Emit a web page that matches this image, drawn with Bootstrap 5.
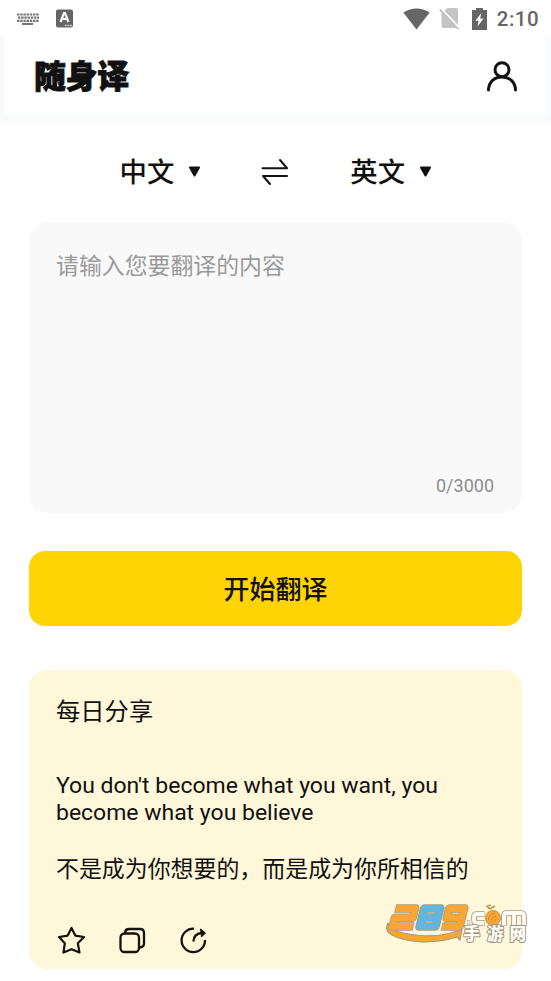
<!DOCTYPE html>
<html lang="zh-CN">
<head>
<meta charset="utf-8">
<meta name="viewport" content="width=device-width, initial-scale=1">
<title>随身译</title>
<link href="https://cdn.jsdelivr.net/npm/bootstrap@5.3.0/dist/css/bootstrap.min.css" rel="stylesheet">
<style>
body{font-family:Roboto,"Noto Sans CJK SC",sans-serif;color:#111;background:#fff;width:551px;height:981px;overflow:hidden}
svg{display:block;flex:none}
.status-bar{height:37px;padding:0 12px 0 17px;color:#666}
.ime-icon{margin-left:17px}
.sim-icon{margin-left:9px}
.battery-icon{margin-left:12px}
.clock{font-size:20.5px;font-weight:500;line-height:24px;letter-spacing:.45px;margin-left:10px}
.app-header{height:78px;margin:0 4px;padding:0 29px 0 30px;box-shadow:0 2px 0 4px #f9fafb;clip-path:inset(0 -4px -6px -4px)}
.brand{font-size:32px;font-weight:900;line-height:40px;letter-spacing:-.4px;padding-top:2px;-webkit-text-stroke:.9px #111}
.lang-row{height:107px;padding:7px 0 0 119.500px;font-size:27.4px;font-weight:500;line-height:40px}
.lang-row span{padding-top:2px}
.caret-icon{margin-left:14px}
.swap-icon{margin-left:60px;margin-right:61px}
.input-box{height:291px;margin:0 29px;padding:26px 28px 14px 27px;background:#f9f9f9;border-radius:20px}
.hint{font-size:22.9px;line-height:38px;color:#9a9a9a}
.counter{font-size:18px;line-height:26px;color:#8d8d8d}
.go-btn{height:75px;width:493px;margin:38px 29px 0;padding-top:8px;background:#ffd405;border:0;border-radius:16px;font-size:26px;font-weight:500;line-height:38px;color:#111}
.go-btn:hover{background:#ffd405}
.daily{height:299px;margin:44px 29px 0;padding:23px 27px 0;background:#fff7d9;border-radius:18px}
.daily-title{font-size:24.3px;line-height:38px}
.quote-en{font-size:22.98px;line-height:27px;margin-top:41px;white-space:nowrap}
.quote-zh{font-size:22.93px;line-height:34px;margin-top:27px;white-space:nowrap}
.actions{margin-top:39px;gap:31px}
.site-mark{left:386px;top:901px}
</style>
<script src="https://cdn.jsdelivr.net/npm/bootstrap@5.3.0/dist/js/bootstrap.bundle.min.js"></script>
</head>
<body class="position-relative">
<div class="status-bar d-flex align-items-center">
  <svg width="22" height="12" viewBox="0 0 22 12" fill="none" stroke="#777" stroke-width="2.200"><path d="M0 1.500H22M1 4.700H22M0 7.900H22" stroke-dasharray="2.400 .8"/><path d="M5 11H16"/></svg>
  <svg class="ime-icon" width="17" height="19" viewBox="0 0 17 19"><rect y=".5" width="17" height="18" rx="2" fill="#666"/><path d="M4.500 13L8 4h1l3.500 9M6 10h5" fill="none" stroke="#fff" stroke-width="2.100"/><path d="M9 16.500h7" stroke="#ddd" stroke-width="1.300" stroke-dasharray="1.600 1"/></svg>
  <svg class="ms-auto" width="27" height="22" viewBox="0 0 27 22" fill="#666"><path d="M.3 4.600Q13.500-3.600 26.700 4.600L13.500 21.500z"/></svg>
  <svg class="sim-icon" width="21" height="23" viewBox="0 0 21 23"><path d="M8.500 1H17q2 0 2 2v15L5.600 4zM2.500 5L17.500 21H4.500q-2 0-2-2z" fill="#c4c4c4"/><path d="M1.500 1.500L20 21" stroke="#fff" stroke-width="1.500"/><path d="M.7 2.400L19.300 22" stroke="#bbb" stroke-width="1.600"/></svg>
  <svg class="battery-icon" width="15" height="22" viewBox="0 0 15 22"><path d="M4 0h7v2h4v20H0V2h4z" fill="#666"/><path d="M9.300 5L3.500 12.800h3.200L5.500 18.500l6-8H8.100z" fill="#fff"/></svg>
  <span class="clock">2:10</span>
</div>
<header class="app-header d-flex align-items-center justify-content-between">
  <div class="brand">随身译</div>
  <svg width="32" height="31" viewBox="0 0 32 31" fill="none" stroke="#111" stroke-width="3" stroke-linecap="round"><circle cx="16" cy="8.700" r="7"/><path d="M2.500 29C2.800 20.500 8.500 16 16 16s13.200 4.500 13.500 13"/></svg>
</header>
<main>
  <div class="lang-row d-flex align-items-center">
    <span>中文</span>
    <svg class="caret-icon" width="13" height="12" viewBox="0 0 13 12"><path d="M2 1.500h9L6.500 9.500z" fill="#111" stroke="#111" stroke-width="2" stroke-linejoin="round"/></svg>
    <svg class="swap-icon" width="28" height="28" viewBox="0 0 28 28" fill="none" stroke="#111" stroke-width="2" stroke-linecap="round" stroke-linejoin="round"><path d="M1.500 10.200H26L19 2M26 18H2L9 26"/></svg>
    <span>英文</span>
    <svg class="caret-icon" width="13" height="12" viewBox="0 0 13 12"><path d="M2 1.500h9L6.500 9.500z" fill="#111" stroke="#111" stroke-width="2" stroke-linejoin="round"/></svg>
  </div>
  <section class="input-box d-flex flex-column justify-content-between">
    <div class="hint">请输入您要翻译的内容</div>
    <div class="counter text-end">0/3000</div>
  </section>
  <button class="go-btn btn d-block" type="button">开始翻译</button>
  <section class="daily">
    <div class="daily-title">每日分享</div>
    <div class="quote-en">You don't become what you want, you<br>become what you believe</div>
    <div class="quote-zh">不是成为你想要的，而是成为你所相信的</div>
    <div class="actions d-flex">
      <svg width="30" height="30" viewBox="0 0 30 30" fill="none" stroke="#15140c" stroke-width="2.200" stroke-linejoin="round"><path d="M15.500 2L19.300 9.600 28 11 21.800 17.300 23.500 26.500 15.500 23.200 7.500 26.500 8.800 17.300 3 11 11.700 9.600z"/></svg>
      <svg width="30" height="30" viewBox="0 0 30 30" fill="none" stroke="#15140c" stroke-width="2.300"><rect x="3.500" y="7.500" width="18.500" height="18.500" rx="4"/><path d="M8 7.500V6.500Q8.500 3 12 3H23Q27 3 27 7V18Q26.500 21.500 22 21.500"/></svg>
      <svg width="30" height="30" viewBox="0 0 30 30" fill="none" stroke="#15140c" stroke-width="2.300"><path d="M16 2.700A11.700 11.700 0 1 0 27 14"/><path d="M15.500 15.500Q15.500 7.500 24.500 7" stroke-width="2.400"/><path d="M22.500 3L27.500 7 23.500 11z" fill="#15140c" stroke-width="1"/></svg>
    </div>
  </section>
</main>
<svg class="site-mark position-absolute" width="144" height="44" viewBox="0 0 144 44">
  <path d="M2 22Q-2 30 6 34C22 42.500 50 43 71 36L74 39 76 28 65 32C46 37 20 35 6 28Q3 26 2 22z" fill="#f9a634" stroke="#a49b81" stroke-width="1.200" stroke-linejoin="round"/>
  <g transform="skewX(-14)" fill="none" stroke-linejoin="round">
    <g stroke="#a49b81" stroke-width="8.600"><path d="M11 7.500H31V16.800H13V25.500H34"/><path d="M62 25.500H80V7.500H65V16.800H80"/><path d="M40 7.500H56V25.500H40zM40 16.500H56"/></g>
    <path d="M11.700 7.500H31V16.800H13V25.500H33.300M62.700 25.500H80V7.500H65V16.800H80" stroke="#f9a634" stroke-width="6.900"/>
    <path d="M40 7.500H56V25.500H40zM40 16.500H56" stroke="#62b6dc" stroke-width="6.900"/>
  </g>
  <g fill="none" stroke-linejoin="round">
    <path d="M98.500 13H91Q88 13 88 16V19Q88 22 91 22H98.500M118 25V15Q118 12 121 12H135Q138 12 138 15V25M128 12V25M81 22H83.500" stroke="#a49b81" stroke-width="5.600"/>
    <path d="M98 13H91Q88 13 88 16V19Q88 22 91 22H98M118 24.500V15Q118 12 121 12H135Q138 12 138 15V24.500M128 12V24.500M81.500 22H83" stroke="#fffdf4" stroke-width="3.800"/>
    <path d="M104 8l-3-3 4-1M104 8l5-3" stroke="#c79b52" stroke-width="1.800"/>
    <circle cx="107" cy="17" r="7.500" fill="#f9a634" stroke="#b79757"/>
    <path d="M102.500 19q0-6 6.500-7M105 20.500q0-4.500 5-5.500M108 21q0-2.500 3-3" stroke="#c08b3c" stroke-width=".8"/>
  </g>
  <g font-family="Noto Sans CJK SC" font-size="16.500" font-weight="900" fill="#fffdf4" stroke="#9c9583" stroke-width="2" stroke-linejoin="round" paint-order="stroke"><text x="77.500" y="39">手</text><text x="101" y="39">游</text><text x="123.500" y="39">网</text></g>
</svg>
</body>
</html>
